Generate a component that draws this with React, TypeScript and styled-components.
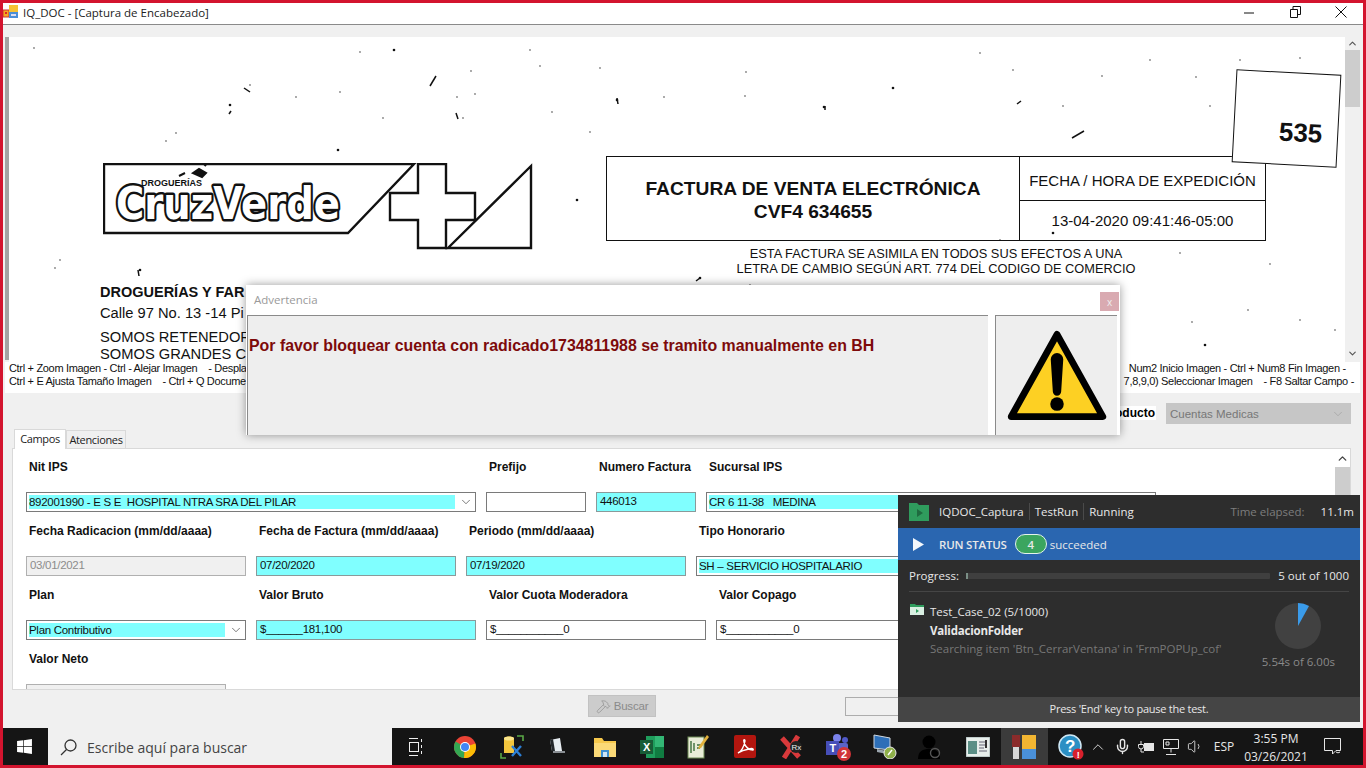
import React from "react";
import styled, { createGlobalStyle } from "styled-components";
import { ChevronDown, ChevronUp, Mic, Volume1, Hammer } from "lucide-react";
import { FaWindows } from "react-icons/fa";

const GlobalStyle = createGlobalStyle`
  html, body { margin: 0; padding: 0; overflow: hidden; }
  body { font-family: "Liberation Sans", Arial, sans-serif; }
  * { box-sizing: border-box; }
`;

const Screen = styled.div`
  position: relative;
  width: 1366px;
  height: 768px;
  border: 3px solid #d3142e;
  display: flex;
  flex-direction: column;
  overflow: hidden;
  background: #f0f0f0;
`;

const AppWindow = styled.div`
  flex: 1;
  min-height: 0;
  display: flex;
  flex-direction: column;
`;

const TitleBar = styled.div`
  height: 22px;
  flex: none;
  background: #fff;
  border-bottom: 1px solid #8a8a8a;
  display: flex;
  align-items: center;
  padding: 0 0 3px 0;
  font: 11.5px "Open Sans", sans-serif;
  color: #222;
`;

const TitleText = styled.span`
  margin-left: 4px;
  flex: 1;
`;

const WinButton = styled.div`
  width: 45.5px;
  height: 19px;
  padding-left: 1px;
  display: flex;
  align-items: center;
  justify-content: center;
`;

const DocArea = styled.div`
  margin: 12px 0 0 2px;
  height: 325px;
  flex: none;
  display: flex;
`;

const LeftStrip = styled.div`
  width: 4px;
  background: #a3a3a3;
  height: 323px;
`;

const Canvas = styled.div`
  position: relative;
  width: 1336px;
  background: #fff;
  overflow: hidden;
  display: flex;
  padding-left: 91px;
  color: #111;
`;

const Specks = styled.svg`
  position: absolute;
  left: 0;
  top: 0;
`;

const ScanLeft = styled.div`
  width: 506px;
  flex: none;
  padding-top: 126px;
`;

const LogoSvg = styled.svg`
  display: block;
  margin-left: 3px;
`;

const CompanyName = styled.div`
  margin-top: 33px;
  font-size: 14.5px;
  font-weight: 700;
  line-height: 17px;
  white-space: nowrap;
`;

const CompanyLine = styled.div<{ $top: number }>`
  margin-top: ${p => p.$top}px;
  font-size: 14.7px;
  line-height: 16px;
  white-space: nowrap;
`;

const ScanRight = styled.div`
  width: 660px;
  flex: none;
  padding-top: 119px;
`;

const InvoiceBox = styled.div`
  height: 85px;
  border: 1.5px solid #111;
  display: flex;
`;

const InvoiceTitle = styled.div`
  width: 413px;
  border-right: 1.5px solid #111;
  display: flex;
  flex-direction: column;
  align-items: center;
  padding-top: 20px;
  font-size: 19.2px;
  font-weight: 700;
  line-height: 23px;
`;

const InvoiceDate = styled.div`
  flex: 1;
  display: flex;
  flex-direction: column;
`;

const DateCell = styled.div<{ $line?: boolean }>`
  flex: 1;
  display: flex;
  align-items: center;
  justify-content: center;
  font-size: 15px;
  white-space: nowrap;
  padding-top: ${p => (p.$line ? 4 : 0)}px;
  border-bottom: ${p => (p.$line ? "1.5px solid #111" : "none")};
`;

const LegalNote = styled.div`
  margin-top: 5px;
  text-align: center;
  font-size: 12.8px;
  line-height: 15px;
  width: 660px;
`;

const StampBox = styled.div`
  position: absolute;
  left: 1225px;
  top: 35px;
  width: 105px;
  height: 93px;
  background: #fff;
  border: 1.5px solid #111;
  transform: rotate(3deg);
  display: flex;
  align-items: flex-end;
  justify-content: flex-end;
  padding: 0 15px 16px 0;
  font-size: 26px;
  font-weight: 700;
`;

const DocScroll = styled.div`
  width: 15px;
  display: flex;
  flex-direction: column;
  align-items: center;
  color: #555;
`;

const ScrollThumb = styled.div<{ $h: number; $top: number }>`
  width: 15px;
  height: ${p => p.$h}px;
  margin-top: ${p => p.$top}px;
  background: #cdcdcd;
  flex: none;
`;

const SpacerGrow = styled.div`
  flex: 1;
`;

const HelpBar = styled.div`
  margin: 0 3px 0 2px;
  height: 31px;
  flex: none;
  background: #fff;
  padding: 0 6px 0 4px;
  font: 11px/13px "Liberation Sans", sans-serif;
  letter-spacing: -0.32px;
  color: #111;
`;

const HelpLine = styled.div`
  display: flex;
  justify-content: space-between;
  white-space: pre;
`;

const ProductRow = styled.div`
  height: 35px;
  flex: none;
  display: flex;
  justify-content: flex-end;
  align-items: flex-start;
  padding: 10px 12px 0 0;
  gap: 10px;
`;

const ProductLabel = styled.span`
  background: #fff;
  font-size: 12px;
  font-weight: 700;
  margin-top: 3px;
  padding: 0 1px;
`;

const ProductSelect = styled.div`
  width: 185px;
  height: 21px;
  background: #c6c6c6;
  color: #777;
  font-size: 11.5px;
  padding: 0 6px 0 4px;
  display: flex;
  align-items: center;
  justify-content: space-between;
`;

const TabRow = styled.div`
  height: 20px;
  flex: none;
  margin-left: 11px;
  display: flex;
  align-items: flex-end;
  font: 11px "Open Sans", sans-serif;
`;

const Tab = styled.div<{ $active?: boolean }>`
  height: ${p => (p.$active ? 20 : 18)}px;
  width: ${p => (p.$active ? 52 : 60)}px;
  background: ${p => (p.$active ? "#fff" : "#f0f0f0")};
  border: 1px solid #d9d9d9;
  border-bottom: none;
  display: flex;
  align-items: center;
  justify-content: center;
  color: #222;
  letter-spacing: -0.35px;
  padding-bottom: ${p => (p.$active ? 3 : 0)}px;
  margin-bottom: ${p => (p.$active ? -1 : 0)}px;
  position: relative;
`;

const FormPanel = styled.div`
  margin: 0 12px 0 9px;
  height: 242px;
  flex: none;
  background: #fff;
  border: 1px solid #d9d9d9;
  display: flex;
  overflow: hidden;
`;

const FormBody = styled.div`
  flex: 1;
  padding: 10px 0 0 13px;
  overflow: hidden;
`;

const FormRow = styled.div`
  display: flex;
  gap: 10px;
  height: 64px;
`;

const Field = styled.div<{ $w: number }>`
  width: ${p => p.$w}px;
  flex: none;
`;

const FieldLabel = styled.div`
  height: 16px;
  margin-bottom: 17px;
  padding-left: 3px;
  font-size: 12px;
  font-weight: 700;
  line-height: 16px;
  color: #111;
  white-space: nowrap;
`;

const TextBox = styled.div<{ $tone?: "cyan" | "white" | "off" }>`
  height: 20px;
  border: 1px solid ${p => (p.$tone === "off" ? "#b0b0b0" : p.$tone === "cyan" ? "#8a9a9a" : "#7a7a7a")};
  background: ${p => (p.$tone === "cyan" ? "#80ffff" : p.$tone === "off" ? "#f0f0f0" : "#fff")};
  color: ${p => (p.$tone === "off" ? "#8c8c8c" : "#111")};
  font-size: 11.5px;
  line-height: 16px;
  padding-left: 3px;
  white-space: pre;
  letter-spacing: -0.3px;
`;

const ComboBox = styled.div`
  height: 20px;
  border: 1px solid #7a7a7a;
  background: #fff;
  padding: 2px;
  display: flex;
  align-items: stretch;
  color: #444;
`;

const ComboValue = styled.div`
  flex: 1;
  background: #80ffff;
  color: #111;
  font-size: 11.5px;
  line-height: 15px;
  white-space: pre;
  letter-spacing: -0.3px;
`;

const ComboArrow = styled.div`
  width: 18px;
  padding-left: 3px;
  display: flex;
  align-items: center;
  justify-content: center;
`;

const FormScroll = styled.div`
  width: 15px;
  flex: none;
  display: flex;
  flex-direction: column;
  align-items: center;
  padding-top: 3px;
  color: #444;
`;

const BottomBar = styled.div`
  flex: 1;
  display: flex;
  align-items: flex-start;
  padding: 5px 0 0 585px;
  gap: 189px;
`;

const SearchButton = styled.div`
  width: 68px;
  height: 22px;
  background: #cccccc;
  border: 1px solid #c2c2c2;
  color: #8a8a8a;
  font-size: 11.5px;
  letter-spacing: -0.2px;
  display: flex;
  align-items: center;
  justify-content: center;
  gap: 3px;
`;

const BlankButton = styled.div`
  width: 120px;
  height: 19px;
  margin-top: 2px;
  border: 1px solid #adadad;
  background: #f0f0f0;
`;

const Taskbar = styled.div`
  height: 37px;
  flex: none;
  background: #151515;
  display: flex;
  align-items: stretch;
`;

const StartButton = styled.div`
  width: 45px;
  padding-right: 2px;
  display: flex;
  align-items: center;
  justify-content: center;
  color: #fff;
`;

const SearchBox = styled.div`
  width: 344px;
  background: #f0f0f0;
  color: #444;
  display: flex;
  align-items: center;
  gap: 10px;
  padding: 2px 0 0 12px;
  font: 14px "Open Sans", sans-serif;
`;

const TaskCell = styled.div<{ $w?: number; $on?: boolean; $after?: number }>`
  width: ${p => p.$w ?? 46.6}px;
  margin-right: ${p => p.$after ?? 0}px;
  flex: none;
  display: flex;
  align-items: center;
  justify-content: center;
  background: ${p => (p.$on ? "#3b3b3b" : "transparent")};
`;

const Tray = styled.div`
  margin-left: auto;
  display: flex;
  padding-right: 9px;
  color: #e6e6e6;
`;

const TrayCell = styled.div<{ $w: number }>`
  width: ${p => p.$w}px;
  flex: none;
  display: flex;
  align-items: center;
  justify-content: center;
  font: 12px "Open Sans", sans-serif;
`;

const Clock = styled.div`
  width: 72px;
  text-align: center;
  font: 12px/18px "Open Sans", sans-serif;
  color: #e6e6e6;
  padding-top: 2px;
`;

const Modal = styled.div`
  position: absolute;
  left: 243px;
  top: 282px;
  width: 874px;
  height: 150px;
  background: #fff;
  box-shadow: 0 0 9px rgba(0, 0, 0, 0.4);
  display: flex;
  flex-direction: column;
`;

const ModalHead = styled.div`
  height: 30px;
  flex: none;
  display: flex;
  align-items: center;
  justify-content: space-between;
  padding: 0 1px 2px 8px;
  font: 11.5px "Open Sans", sans-serif;
  color: #9a9a9a;
`;

const ModalClose = styled.div`
  width: 19px;
  height: 19px;
  margin-top: 5px;
  background: #d9aab1;
  color: #eee;
  font-size: 10px;
  display: flex;
  align-items: center;
  justify-content: center;
`;

const ModalBody = styled.div`
  flex: 1;
  display: flex;
  gap: 7px;
  padding: 0 3px 0 1px;
`;

const ModalPane = styled.div<{ $fill?: boolean }>`
  ${p => (p.$fill ? "flex: 1;" : "width: 122px;")}
  background: #eeeeee;
  border-top: 1px solid #8a8a8a;
  border-left: 1px solid #8a8a8a;
  display: flex;
  align-items: ${p => (p.$fill ? "flex-start" : "center")};
  justify-content: ${p => (p.$fill ? "flex-start" : "center")};
`;

const ModalMessage = styled.div`
  margin: 21px 0 0 1px;
  font-size: 15.9px;
  font-weight: 700;
  line-height: 18px;
  color: #7d0a0a;
  white-space: nowrap;
`;

const RunPanel = styled.div`
  position: absolute;
  left: 895px;
  top: 492px;
  width: 462px;
  height: 227px;
  background: #2d2d2d;
  display: flex;
  flex-direction: column;
  font: 11.5px "Open Sans", sans-serif;
  color: #e8e8e8;
`;

const RunHead = styled.div`
  height: 33px;
  flex: none;
  display: flex;
  align-items: center;
  padding: 0 6px 0 11px;
`;

const HeadItem = styled.span<{ $first?: boolean }>`
  padding: 0 5px;
  margin-left: ${p => (p.$first ? 5 : 0)}px;
  border-left: ${p => (p.$first ? "none" : "1px solid #4a4a4a")};
  line-height: 17px;
`;

const HeadSpacer = styled.div`
  flex: 1;
`;

const Elapsed = styled.span`
  color: #7d7d7d;
  margin-right: 16px;
`;

const StatusBar = styled.div`
  height: 32px;
  flex: none;
  background: #2a66b0;
  display: flex;
  align-items: center;
  padding-left: 15px;
`;

const StatusName = styled.span`
  margin-left: 14px;
  font-weight: 600;
  letter-spacing: -0.2px;
`;

const StatusPill = styled.span`
  width: 32px;
  height: 20px;
  margin: 0 3px 0 8px;
  border-radius: 10px;
  background: #3ba55f;
  border: 1.5px solid #e4f3ea;
  display: flex;
  align-items: center;
  justify-content: center;
  font-weight: 600;
`;

const ProgressRow = styled.div`
  height: 32px;
  flex: none;
  margin: 0 11px;
  border-bottom: 1px solid #454545;
  display: flex;
  align-items: center;
  white-space: nowrap;
`;

const ProgressLabel = styled.span`
  width: 57px;
  flex: none;
`;

const ProgressTrack = styled.div`
  width: 304px;
  height: 6px;
  flex: none;
  background: #3f3f3f;
  border-radius: 1px;
`;

const ProgressFill = styled.div`
  height: 100%;
  background: #7a8f86;
`;

const ProgressCount = styled.span`
  margin-left: auto;
`;

const RunBody = styled.div`
  flex: 1;
  display: flex;
  justify-content: space-between;
  padding: 11px 25px 0 12px;
`;

const CaseCol = styled.div`
  display: flex;
  gap: 6px;
`;

const CaseText = styled.div`
  line-height: 18.5px;
`;

const CaseName = styled.div`
  font-weight: 700;
  letter-spacing: -0.2px;
`;

const CaseStep = styled.div`
  color: #777;
`;

const PieCol = styled.div`
  display: flex;
  flex-direction: column;
  align-items: center;
  color: #8a8a8a;
  gap: 5px;
`;

const RunFoot = styled.div`
  height: 25px;
  flex: none;
  background: #454545;
  display: flex;
  align-items: center;
  justify-content: center;
  padding-bottom: 2px;
  font-size: 11px;
  letter-spacing: -0.25px;
`;

const SPECKS: [number, number, number?][] = [
  [394, 50, 2], [34, 48], [230, 105, 2], [360, 52], [250, 85], [340, 92, 1], [296, 97], [471, 71], [457, 97], [463, 118],
  [383, 118], [166, 141], [176, 133], [338, 150, 2], [530, 50], [540, 66], [475, 94], [552, 112], [590, 132], [55, 268],
  [617, 100, 2], [746, 72], [824, 107, 2], [664, 97], [893, 88, 2], [980, 53], [1013, 70], [1063, 106], [1102, 76],
  [1210, 106], [1240, 60], [1196, 77], [1300, 58], [1350, 84], [1150, 60], [745, 96], [600, 68], [577, 200, 2],
  [1270, 264], [1300, 320], [1335, 330], [1205, 345, 2], [1192, 322], [1248, 310], [700, 278, 2], [750, 285], [1000, 240],
  [900, 262], [1180, 253], [1053, 233, 2], [980, 262], [140, 270, 2], [60, 260],
];

const SLASHES: [number, number, number, number][] = [
  [430, 86, 436, 76], [244, 88, 250, 92], [229, 114, 231, 111], [1072, 138, 1084, 131], [617, 98, 618, 104],
  [825, 106, 825, 110], [1017, 104, 1021, 101], [456, 113, 458, 119], [138, 270, 139, 276], [700, 278, 696, 281],
];

const ScanSpecks = () => (
  <Specks width="1336" height="326" viewBox="9 37 1336 326">
    {SPECKS.map(([x, y, r], i) => (
      <circle key={i} cx={x} cy={y} r={(r ?? 1) * 0.65} fill="#111" />
    ))}
    {SLASHES.map(([a, b, c, d], i) => (
      <line key={i} x1={a} y1={b} x2={c} y2={d} stroke="#111" strokeWidth="1.5" />
    ))}
  </Specks>
);

const CruzVerdeLogo = () => (
  <LogoSvg width="430" height="88" viewBox="0 0 430 88">
    <path d="M1 1H311L245 70H1Z" fill="none" stroke="#111" strokeWidth="2.4" />
    <path d="M428 3V85H345Z" fill="#fff" stroke="#111" strokeWidth="2.4" />
    <path d="M315 1H343V30H372V57H343V85H315V57H287V30H315Z" fill="#fff" stroke="#111" strokeWidth="2.4" />
    <text x="13" y="56" textLength="224" lengthAdjust="spacingAndGlyphs" fontFamily="DejaVu Sans" fontWeight="700"
      fontSize="45" fill="#fff" stroke="#111" strokeWidth="5" paintOrder="stroke" strokeLinejoin="round">CruzVerde</text>
    <text x="38" y="23" fontFamily="Liberation Sans" fontWeight="700" fontSize="9" fill="#111">DROGUERÍAS</text>
    <path d="M90 10l6-4 7 4-4 4zM100 0l3 3M76 13l6-3" stroke="#111" strokeWidth="2" fill="#111" />
  </LogoSvg>
);

const AppGlyph = () => (
  <svg width="16" height="16" viewBox="0 0 16 16">
    <rect x="0" y="6" width="6" height="7" fill="#f5a623" stroke="#c33" />
    <rect x="2" y="8" width="2" height="2" fill="#d22" />
    <rect x="6" y="1" width="9" height="7" fill="#f7c234" />
    <rect x="6" y="8" width="9" height="6" fill="#4a8ed8" />
    <rect x="8" y="10" width="5" height="2" fill="#dde" />
  </svg>
);

const MinIcon = () => (
  <svg width="11" height="11" viewBox="0 0 11 11"><path d="M0 6h10" stroke="#111" strokeWidth="1" /></svg>
);
const RestoreIcon = () => (
  <svg width="11" height="12" viewBox="0 0 11 12"><path d="M.5 3.5h7v8h-7zM3 3.5v-3h7.5v8H7.5" fill="none" stroke="#111" /></svg>
);
const CloseIcon = () => (
  <svg width="12" height="12" viewBox="0 0 12 12"><path d="M.5.5l11 11M11.5.5l-11 11" stroke="#111" /></svg>
);

const WarningSign = () => (
  <svg width="102" height="94" viewBox="0 0 98 90">
    <path d="M49 5L93 84H5Z" fill="#fdd023" stroke="#000" strokeWidth="6.5" strokeLinejoin="round" />
    <path d="M44 29a5 5 0 0 1 10 0L52 60a3 3 0 0 1-6 0Z" fill="#000" stroke="#000" strokeWidth="2" />
    <circle cx="49" cy="72" r="6.5" fill="#000" />
  </svg>
);

const GreenFolder = () => (
  <svg width="20" height="18" viewBox="0 0 20 18">
    <path d="M0 0h8l2 2h10v16H0Z" fill="#2f9c5d" />
    <path d="M8 6l6 4-6 4Z" fill="#1f6b40" />
  </svg>
);

const SmallFolder = () => (
  <svg width="14" height="13" viewBox="0 0 14 13">
    <path d="M0 1h5l1 1h8v2H0Z" fill="#2f9c5d" />
    <rect x="0" y="4" width="14" height="8" fill="#d9efe2" />
    <path d="M6 6l3 2-3 2Z" fill="#2f9c5d" />
  </svg>
);

const PlayIcon = () => (
  <svg width="12" height="13" viewBox="0 0 12 13"><path d="M0 0l11 6.5L0 13Z" fill="#f4f8fc" /></svg>
);

const TimePie = () => (
  <svg width="46" height="46" viewBox="0 0 46 46">
    <circle cx="23" cy="23" r="23" fill="#414141" />
    <path d="M23 23V0a23 23 0 0 1 11 3Z" fill="#3a9bea" />
  </svg>
);

const SearchGlass = () => (
  <svg width="17" height="17" viewBox="0 0 17 17" fill="none" stroke="#333" strokeWidth="1.3">
    <circle cx="10.500" cy="6.500" r="5.500" />
    <path d="M6.500 10.500L1 16" />
  </svg>
);

const TaskView = () => (
  <svg width="16" height="18" viewBox="0 0 16 18" fill="none" stroke="#eee">
    <path d="M1 .5h9M1 17.500h9" />
    <rect x="1.500" y="4.500" width="9" height="9" />
    <path d="M13.500 1v3M13.500 7v3M13.500 13v3" />
  </svg>
);

const ChromeIcon = () => (
  <svg width="22" height="22" viewBox="0 0 22 22">
    <circle cx="11" cy="11" r="11" fill="#ea4335" />
    <path d="M11 11L1.500 5.500A11 11 0 0 0 10 22Z" fill="#34a853" />
    <path d="M11 11L21.400 7.500A11 11 0 0 1 10 22Z" fill="#fbbc05" />
    <circle cx="11" cy="11" r="5" fill="#fff" />
    <circle cx="11" cy="11" r="4" fill="#4285f4" />
  </svg>
);

const DbToolIcon = () => (
  <svg width="24" height="24" viewBox="0 0 24 24">
    <path d="M4 3c2-2 8-2 10 0v15H4Z" fill="#f2c53d" />
    <ellipse cx="9" cy="3.500" rx="5" ry="2" fill="#fbe58a" />
    <path d="M1 18v5h5M23 6V1h-6" fill="none" stroke="#5aa846" strokeWidth="1.6" />
    <path d="M12 11l9 10M21 11l-9 10" stroke="#2c7fd6" strokeWidth="2.4" />
  </svg>
);

const ClapIcon = () => (
  <svg width="18" height="18" viewBox="0 0 18 18">
    <path d="M1 2l10-2 2 13H3Z" fill="#e8eef2" />
    <path d="M4 13h12v2H4Z" fill="#8a8f94" />
    <path d="M1 2l3-1 2 12H3Z" fill="#22272b" />
  </svg>
);

const ExplorerIcon = () => (
  <svg width="22" height="20" viewBox="0 0 22 20">
    <path d="M0 1h8l2 3h12v16H0Z" fill="#f6c84c" />
    <rect y="6" width="22" height="14" fill="#fbd977" />
    <rect x="7" y="13" width="8" height="7" fill="#3d8fd1" />
    <rect x="9" y="15" width="4" height="5" fill="#cfe5f5" />
  </svg>
);

const ExcelIcon = () => (
  <svg width="24" height="22" viewBox="0 0 24 22">
    <rect x="6" y="0" width="18" height="22" fill="#1f9d5c" />
    <rect x="15" y="0" width="9" height="11" fill="#33b775" />
    <rect x="15" y="11" width="9" height="11" fill="#107c41" />
    <rect x="0" y="4" width="13" height="14" fill="#185c37" />
    <text x="3" y="15" fontFamily="Liberation Sans" fontWeight="700" fontSize="11" fill="#fff">X</text>
  </svg>
);

const NotepadIcon = () => (
  <svg width="22" height="24" viewBox="0 0 22 24">
    <rect x="1" y="2" width="16" height="21" fill="#e8ecd8" stroke="#6d8a55" />
    <path d="M4 6v12M7 8v8M10 10h5M10 13h3" stroke="#3c6e3a" strokeWidth="1.4" />
    <path d="M20 0l2 2-8 11-3 1 1-3Z" fill="#e2b13c" />
  </svg>
);

const AcrobatIcon = () => (
  <svg width="22" height="23" viewBox="0 0 22 23">
    <rect width="22" height="23" rx="2" fill="#b3160f" />
    <path d="M4 18c3-1 6-6 7-12 0-2-2-2-1 1 1 5 5 8 9 8 1-1-1-2-4-1-4 .7-8 2-11 4Z" fill="none" stroke="#fff" strokeWidth="1.4" />
  </svg>
);

const RxIcon = () => (
  <svg width="24" height="24" viewBox="0 0 24 24">
    <path d="M3 3l17 19M19 1L5 23" stroke="#d8393b" strokeWidth="5" />
    <circle cx="17" cy="12" r="6" fill="#222" />
    <text x="12.500" y="15" fontFamily="Liberation Sans" fontSize="8" fill="#eee">Rx</text>
  </svg>
);

const TeamsIcon = () => (
  <svg width="26" height="28" viewBox="0 0 26 28">
    <circle cx="12" cy="5" r="4" fill="#7b83eb" />
    <circle cx="20" cy="7" r="3" fill="#5059c9" />
    <rect x="9" y="10" width="14" height="12" rx="2" fill="#5b63c7" />
    <rect x="1" y="8" width="13" height="14" fill="#464eb8" />
    <text x="4.500" y="19" fontFamily="Liberation Sans" fontWeight="700" fontSize="11" fill="#fff">T</text>
    <circle cx="19" cy="21" r="7" fill="#d13438" />
    <text x="16" y="25" fontFamily="Liberation Sans" fontWeight="700" fontSize="11" fill="#fff">2</text>
  </svg>
);

const RemoteIcon = () => (
  <svg width="24" height="25" viewBox="0 0 24 25">
    <path d="M1 1l16 3v12L1 14Z" fill="#2d6fb8" stroke="#cfd8e0" />
    <path d="M4 15l10 2v3l-10-2Z" fill="#9aa4ad" />
    <circle cx="17" cy="19" r="6" fill="#8fb04a" stroke="#e8e8e8" />
    <path d="M15 21l4-5" stroke="#fff" strokeWidth="1.4" />
  </svg>
);

const UserLockIcon = () => (
  <svg width="26" height="24" viewBox="0 0 26 24">
    <circle cx="11" cy="7" r="6.500" fill="#000" />
    <path d="M0 24c0-8 5-10 11-10s11 2 11 10Z" fill="#000" />
    <circle cx="17" cy="18" r="4.500" fill="none" stroke="#555" strokeWidth="1.4" />
  </svg>
);

const WindowDocIcon = () => (
  <svg width="24" height="20" viewBox="0 0 24 20">
    <rect width="24" height="20" fill="#e8efec" stroke="#9aa" />
    <rect x="2" y="4" width="9" height="13" fill="#5b8f86" />
    <path d="M13 5h8M13 8h8M13 11h5M13 14h8" stroke="#667" />
    <path d="M20 3v8" stroke="#333" strokeWidth="2" />
  </svg>
);

const BoardIcon = () => (
  <svg width="25" height="26" viewBox="0 0 25 26">
    <rect x="0" y="1" width="8" height="12" fill="#8a2b2b" />
    <rect x="1" y="13" width="6" height="12" fill="#d8d8d8" />
    <rect x="10" y="1" width="14" height="14" fill="#f2b632" />
    <rect x="10" y="15" width="14" height="10" fill="#4a90d9" />
  </svg>
);

const HelpBadge = () => (
  <svg width="26" height="26" viewBox="0 0 26 26">
    <circle cx="12" cy="12" r="11" fill="#2a8fc4" stroke="#cfe8f5" strokeWidth="1.5" />
    <text x="7" y="18" fontFamily="Liberation Sans" fontWeight="700" fontSize="17" fill="#fff">?</text>
    <circle cx="20" cy="20" r="5.500" fill="#d8202c" />
    <text x="18.700" y="23.500" fontFamily="Liberation Sans" fontWeight="700" fontSize="9" fill="#fff">!</text>
  </svg>
);

const BatteryPlug = () => (
  <svg width="16" height="14" viewBox="0 0 16 14" fill="none" stroke="#e6e6e6">
    <rect x="6.500" y="3.500" width="9" height="7" fill="#e6e6e6" />
    <path d="M3 1v3M0.500 4.500h5v2a2.500 2.500 0 0 1-5 0ZM3 9v3h3" />
  </svg>
);

const NetworkIcon = () => (
  <svg width="16" height="16" viewBox="0 0 16 16" fill="none" stroke="#e6e6e6">
    <path d="M.5 .5h15v9h-15z" />
    <path d="M8 9.500v4M3 15.500h10M3 3h3v3H3z" />
  </svg>
);

const NotifyIcon = () => (
  <svg width="18" height="18" viewBox="0 0 18 18" fill="none" stroke="#e6e6e6">
    <path d="M.5 .5h16v12H12L8.500 16v-3.500H.5z" />
    <path d="M12 14a3 3 0 0 0 4 0" />
  </svg>
);

const TASK_ICONS = [
  <ChromeIcon key="chrome" />,
  <DbToolIcon key="db" />,
  <ClapIcon key="clap" />,
  <ExplorerIcon key="explorer" />,
  <ExcelIcon key="excel" />,
  <NotepadIcon key="notepad" />,
  <AcrobatIcon key="acrobat" />,
  <RxIcon key="rx" />,
  <TeamsIcon key="teams" />,
  <RemoteIcon key="remote" />,
  <UserLockIcon key="user" />,
  <WindowDocIcon key="doc" />,
];

const App = () => {
  return (
    <Screen>
      <GlobalStyle />
      <AppWindow>
        <TitleBar>
          <AppGlyph />
          <TitleText>IQ_DOC - [Captura de Encabezado]</TitleText>
          <WinButton><MinIcon /></WinButton>
          <WinButton><RestoreIcon /></WinButton>
          <WinButton><CloseIcon /></WinButton>
        </TitleBar>

        <DocArea>
          <LeftStrip />
          <Canvas>
            <ScanSpecks />
            <ScanLeft>
              <CruzVerdeLogo />
              <CompanyName>DROGUERÍAS Y FAR</CompanyName>
              <CompanyLine $top={4}>Calle 97 No. 13 -14 Pi</CompanyLine>
              <CompanyLine $top={8}>SOMOS RETENEDOR</CompanyLine>
              <CompanyLine $top={1}>SOMOS GRANDES C</CompanyLine>
            </ScanLeft>
            <ScanRight>
              <InvoiceBox>
                <InvoiceTitle>
                  <span>FACTURA DE VENTA ELECTRÓNICA</span>
                  <span>CVF4 634655</span>
                </InvoiceTitle>
                <InvoiceDate>
                  <DateCell $line>FECHA / HORA DE EXPEDICIÓN</DateCell>
                  <DateCell>13-04-2020 09:41:46-05:00</DateCell>
                </InvoiceDate>
              </InvoiceBox>
              <LegalNote>
                ESTA FACTURA SE ASIMILA EN TODOS SUS EFECTOS A UNA<br />
                LETRA DE CAMBIO SEGÚN ART. 774 DEL CODIGO DE COMERCIO
              </LegalNote>
            </ScanRight>
            <StampBox>535</StampBox>
          </Canvas>
          <DocScroll>
            <ChevronUp size={11} strokeWidth={2.5} style={{ marginTop: 1 }} />
            <ScrollThumb $h={57} $top={1} />
            <SpacerGrow />
            <ChevronDown size={11} strokeWidth={2.5} style={{ marginBottom: 3 }} />
          </DocScroll>
        </DocArea>

        <HelpBar>
          <HelpLine>
            <span>Ctrl + Zoom Imagen - Ctrl - Alejar Imagen    - Despla</span>
            <span>Num2 Inicio Imagen - Ctrl + Num8 Fin Imagen -   </span>
          </HelpLine>
          <HelpLine>
            <span>Ctrl + E Ajusta Tamaño Imagen    - Ctrl + Q Docume</span>
            <span>7,8,9,0) Seleccionar Imagen    - F8 Saltar Campo -</span>
          </HelpLine>
        </HelpBar>

        <ProductRow>
          <ProductLabel>oducto</ProductLabel>
          <ProductSelect>
            Cuentas Medicas
            <ChevronDown size={14} strokeWidth={1} color="#999" />
          </ProductSelect>
        </ProductRow>

        <TabRow>
          <Tab $active>Campos</Tab>
          <Tab>Atenciones</Tab>
        </TabRow>

        <FormPanel>
          <FormBody>
            <FormRow>
              <Field $w={450}>
                <FieldLabel>Nit IPS</FieldLabel>
                <ComboBox>
                  <ComboValue>892001990 - E S E  HOSPITAL NTRA SRA DEL PILAR</ComboValue>
                  <ComboArrow><ChevronDown size={14} strokeWidth={1.2} /></ComboArrow>
                </ComboBox>
              </Field>
              <Field $w={100}>
                <FieldLabel>Prefijo</FieldLabel>
                <TextBox />
              </Field>
              <Field $w={100}>
                <FieldLabel>Numero Factura</FieldLabel>
                <TextBox $tone="cyan">446013</TextBox>
              </Field>
              <Field $w={450}>
                <FieldLabel>Sucursal IPS</FieldLabel>
                <ComboBox>
                  <ComboValue>CR 6 11-38   MEDINA</ComboValue>
                  <ComboArrow><ChevronDown size={14} strokeWidth={1.2} /></ComboArrow>
                </ComboBox>
              </Field>
            </FormRow>
            <FormRow>
              <Field $w={220}>
                <FieldLabel>Fecha Radicacion (mm/dd/aaaa)</FieldLabel>
                <TextBox $tone="off">03/01/2021</TextBox>
              </Field>
              <Field $w={200}>
                <FieldLabel>Fecha de Factura (mm/dd/aaaa)</FieldLabel>
                <TextBox $tone="cyan">07/20/2020</TextBox>
              </Field>
              <Field $w={220}>
                <FieldLabel>Periodo (mm/dd/aaaa)</FieldLabel>
                <TextBox $tone="cyan">07/19/2020</TextBox>
              </Field>
              <Field $w={450}>
                <FieldLabel>Tipo Honorario</FieldLabel>
                <ComboBox>
                  <ComboValue>SH – SERVICIO HOSPITALARIO</ComboValue>
                  <ComboArrow><ChevronDown size={14} strokeWidth={1.2} /></ComboArrow>
                </ComboBox>
              </Field>
            </FormRow>
            <FormRow>
              <Field $w={220}>
                <FieldLabel>Plan</FieldLabel>
                <ComboBox>
                  <ComboValue>Plan Contributivo</ComboValue>
                  <ComboArrow><ChevronDown size={14} strokeWidth={1.2} /></ComboArrow>
                </ComboBox>
              </Field>
              <Field $w={220}>
                <FieldLabel>Valor Bruto</FieldLabel>
                <TextBox $tone="cyan">$______181,100</TextBox>
              </Field>
              <Field $w={220}>
                <FieldLabel>Valor Cuota Moderadora</FieldLabel>
                <TextBox>$___________0</TextBox>
              </Field>
              <Field $w={220}>
                <FieldLabel>Valor Copago</FieldLabel>
                <TextBox>$___________0</TextBox>
              </Field>
            </FormRow>
            <FormRow>
              <Field $w={200}>
                <FieldLabel>Valor Neto</FieldLabel>
                <TextBox $tone="off" />
              </Field>
            </FormRow>
          </FormBody>
          <FormScroll>
            <ChevronUp size={13} strokeWidth={2.5} />
            <ScrollThumb $h={120} $top={2} />
          </FormScroll>
        </FormPanel>

        <BottomBar>
          <SearchButton>
            <Hammer size={15} strokeWidth={1.4} color="#999" />
            Buscar
          </SearchButton>
          <BlankButton />
        </BottomBar>
      </AppWindow>

      <Taskbar>
        <StartButton><FaWindows size={17} /></StartButton>
        <SearchBox>
          <SearchGlass />
          Escribe aquí para buscar
        </SearchBox>
        <TaskCell $w={47} $after={3}><TaskView /></TaskCell>
        {TASK_ICONS.map(icon => (
          <TaskCell key={icon.key}>{icon}</TaskCell>
        ))}
        <TaskCell $on><BoardIcon /></TaskCell>
        <Tray>
          <TrayCell $w={26}><HelpBadge /></TrayCell>
          <TrayCell $w={28}><ChevronUp size={18} strokeWidth={1.2} /></TrayCell>
          <TrayCell $w={20}><Mic size={17} strokeWidth={2} /></TrayCell>
          <TrayCell $w={28}><BatteryPlug /></TrayCell>
          <TrayCell $w={22}><NetworkIcon /></TrayCell>
          <TrayCell $w={26}><Volume1 size={17} strokeWidth={1.2} /></TrayCell>
          <TrayCell $w={32}>ESP</TrayCell>
          <Clock>3:55 PM<br />03/26/2021</Clock>
          <TrayCell $w={42}><NotifyIcon /></TrayCell>
        </Tray>
      </Taskbar>

      <Modal>
        <ModalHead>
          Advertencia
          <ModalClose>x</ModalClose>
        </ModalHead>
        <ModalBody>
          <ModalPane $fill>
            <ModalMessage>Por favor bloquear cuenta con radicado1734811988 se tramito manualmente en BH</ModalMessage>
          </ModalPane>
          <ModalPane><WarningSign /></ModalPane>
        </ModalBody>
      </Modal>

      <RunPanel>
        <RunHead>
          <GreenFolder />
          <HeadItem $first>IQDOC_Captura</HeadItem>
          <HeadItem>TestRun</HeadItem>
          <HeadItem>Running</HeadItem>
          <HeadSpacer />
          <Elapsed>Time elapsed:</Elapsed>
          11.1m
        </RunHead>
        <StatusBar>
          <PlayIcon />
          <StatusName>RUN STATUS</StatusName>
          <StatusPill>4</StatusPill>
          succeeded
        </StatusBar>
        <ProgressRow>
          <ProgressLabel>Progress:</ProgressLabel>
          <ProgressTrack>
            <ProgressFill style={{ width: `${(5 / 1000) * 100}%` }} />
          </ProgressTrack>
          <ProgressCount>5 out of 1000</ProgressCount>
        </ProgressRow>
        <RunBody>
          <CaseCol>
            <SmallFolder />
            <CaseText>
              <div>Test_Case_02 (5/1000)</div>
              <CaseName>ValidacionFolder</CaseName>
              <CaseStep>Searching item 'Btn_CerrarVentana' in 'FrmPOPUp_cof'</CaseStep>
            </CaseText>
          </CaseCol>
          <PieCol>
            <TimePie />
            5.54s of 6.00s
          </PieCol>
        </RunBody>
        <RunFoot>Press 'End' key to pause the test.</RunFoot>
      </RunPanel>
    </Screen>
  );
};

export default App;
